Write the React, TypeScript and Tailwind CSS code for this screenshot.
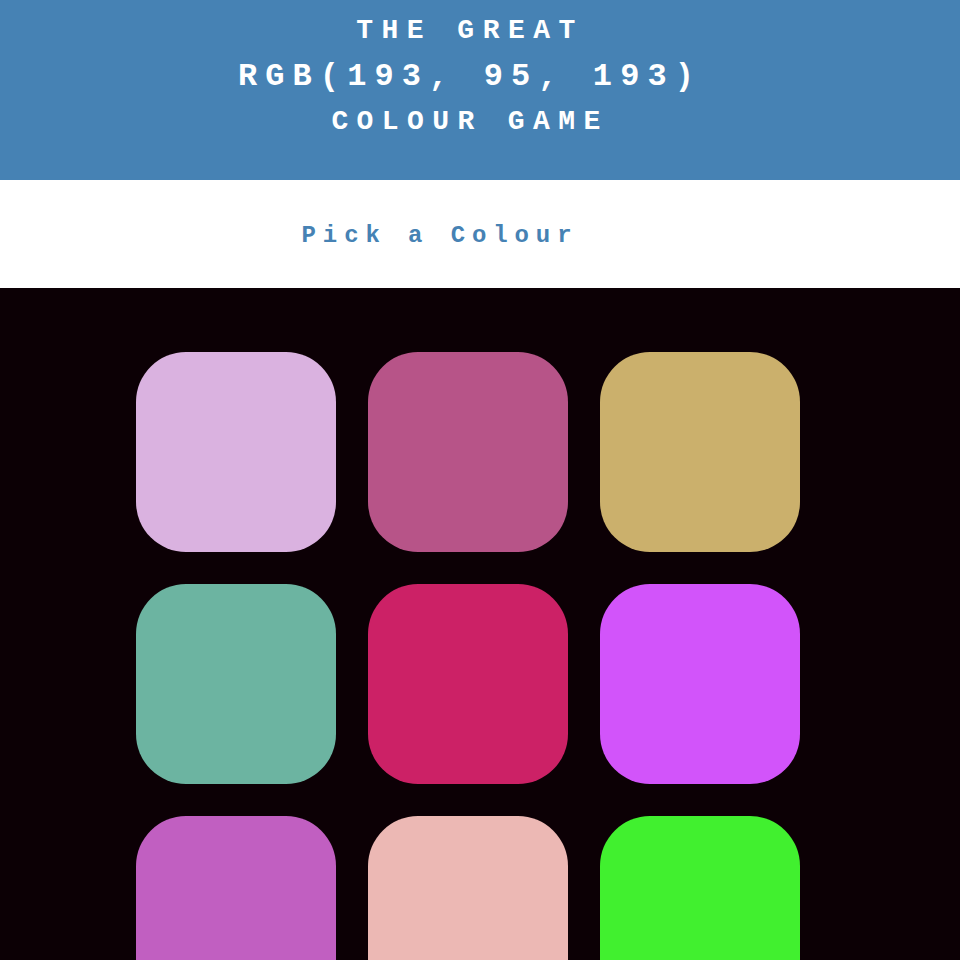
const squares = [
  "#dab2e0",
  "#b75488",
  "#cbb06c",
  "#6cb4a1",
  "#cc2166",
  "#d254fa",
  "rgb(193, 95, 193)",
  "#ecb8b4",
  "#41f02f",
];

export default function App() {
  return (
    <div className="min-h-[960px] bg-[#0c0005] font-['Courier_New','Liberation_Mono',monospace]">
      <header className="h-[180px] bg-[#4682b4] pr-5 pt-2 text-center font-bold uppercase leading-[45.5px] text-white">
        <div className="text-[28px] tracking-[8.5px]">The Great</div>
        <div className="text-[32px] tracking-[8.1px]">rgb(193, 95, 193)</div>
        <div className="text-[28px] tracking-[8.4px]">Colour Game</div>
      </header>

      <div className="flex h-[108px] items-center justify-center bg-white pt-1">
        <span className="mr-[80px] text-[24px] font-bold tracking-[6.9px] text-[#4682b4]">
          Pick a Colour
        </span>
      </div>

      <div className="grid grid-cols-[repeat(3,200px)] gap-8 pl-[136px] pt-16">
        {squares.map((color, i) => (
          <div
            key={i}
            className="h-[200px] w-[200px] rounded-[50px]"
            style={{ backgroundColor: color }}
          />
        ))}
      </div>
    </div>
  );
}
